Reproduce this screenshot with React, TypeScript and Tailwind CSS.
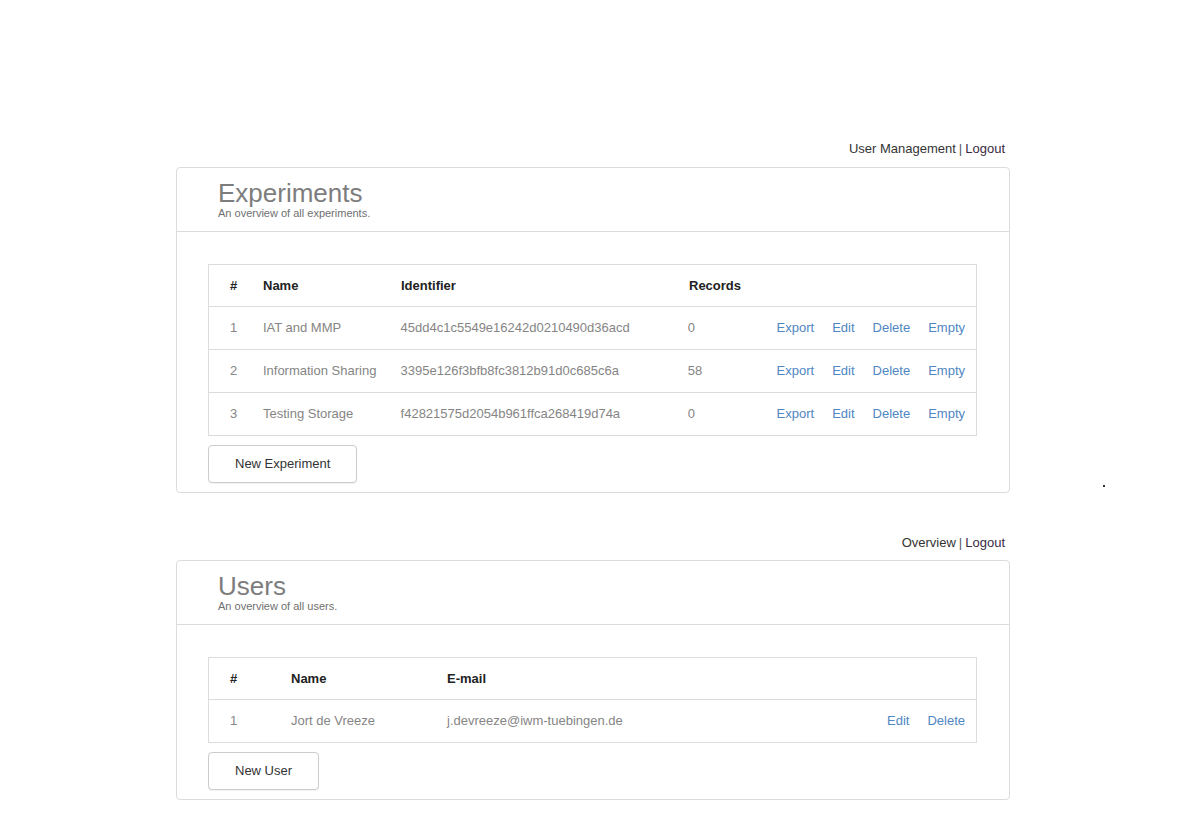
const EXPERIMENTS = [
  { id: 1, name: 'IAT and MMP', identifier: '45dd4c1c5549e16242d0210490d36acd', records: 0 },
  { id: 2, name: 'Information Sharing', identifier: '3395e126f3bfb8fc3812b91d0c685c6a', records: 58 },
  { id: 3, name: 'Testing Storage', identifier: 'f42821575d2054b961ffca268419d74a', records: 0 },
]

const USERS = [{ id: 1, name: 'Jort de Vreeze', email: 'j.devreeze@iwm-tuebingen.de' }]

function TopLinks({ first }: { first: string }) {
  return (
    <div className="flex justify-end pr-[5px] text-[13px] leading-[15px] text-[#333]">
      <a href="#">{first}</a>
      <span className="px-[3px] text-[#555]">|</span>
      <a href="#" className="text-[#3a2b45]">Logout</a>
    </div>
  )
}

function Panel({ title, subtitle, children }: { title: string; subtitle: string; children: React.ReactNode }) {
  return (
    <div className="w-[834px] rounded-[4px] border border-[#dcdcdc] bg-white">
      <div className="h-[64px] border-b border-[#dcdcdc] pl-[41px] pt-[12px]">
        <h1 className="text-[26px] leading-[26px] text-[#7d7d7d]">{title}</h1>
        <p className="mt-[1px] text-[11px] leading-[13px] text-[#6f6f6f]">{subtitle}</p>
      </div>
      <div className="pl-[31px] pr-[32px] pt-[32px] pb-[9px]">{children}</div>
    </div>
  )
}

function Actions({ items }: { items: string[] }) {
  return (
    <div className="flex flex-1 justify-end gap-[18px] pr-[11px] text-[#4f86c3]">
      {items.map((label) => (
        <a key={label} href="#">{label}</a>
      ))}
    </div>
  )
}

function Button({ label }: { label: string }) {
  return (
    <button className="mt-[9px] h-[38px] rounded-[4px] border border-[#cccccc] bg-white px-[26px] text-[13px] text-[#333] shadow-[0_1px_1px_rgba(0,0,0,0.06)]">
      {label}
    </button>
  )
}

export default function App() {
  return (
    <div className="relative min-h-[826px] bg-white font-['Liberation_Sans',Arial,sans-serif] text-[13px]">
      <div className="ml-[176px] w-[834px] pt-[141px]">
        <TopLinks first="User Management" />
        <div className="mt-[11px]">
          <Panel title="Experiments" subtitle="An overview of all experiments.">
            <div className="border border-[#dcdcdc]">
              <div className="flex h-[41px] items-center font-bold text-[#222]">
                <div className="w-[54px] pl-[21px]">#</div>
                <div className="w-[138px]">Name</div>
                <div className="w-[288px]">Identifier</div>
                <div className="w-[89px]">Records</div>
              </div>
              {EXPERIMENTS.map((e) => (
                <div key={e.id} className="flex h-[43px] items-center border-t border-[#dcdcdc] text-[#858585]">
                  <div className="w-[54px] pl-[21px]">{e.id}</div>
                  <div className="w-[138px]">{e.name}</div>
                  <div className="w-[288px]">{e.identifier}</div>
                  <div className="w-[89px]">{e.records}</div>
                  <Actions items={['Export', 'Edit', 'Delete', 'Empty']} />
                </div>
              ))}
            </div>
            <Button label="New Experiment" />
          </Panel>
        </div>

        <div className="mt-[42px]">
          <TopLinks first="Overview" />
        </div>
        <div className="mt-[10px]">
          <Panel title="Users" subtitle="An overview of all users.">
            <div className="border border-[#dcdcdc]">
              <div className="flex h-[41px] items-center font-bold text-[#222]">
                <div className="w-[82px] pl-[21px]">#</div>
                <div className="w-[156px]">Name</div>
                <div className="w-[300px]">E-mail</div>
              </div>
              {USERS.map((u) => (
                <div key={u.id} className="flex h-[43px] items-center border-t border-[#dcdcdc] text-[#858585]">
                  <div className="w-[82px] pl-[21px]">{u.id}</div>
                  <div className="w-[156px]">{u.name}</div>
                  <div className="w-[300px]">{u.email}</div>
                  <Actions items={['Edit', 'Delete']} />
                </div>
              ))}
            </div>
            <Button label="New User" />
          </Panel>
        </div>
      </div>

      {/* stray dot on the right */}
      <div className="absolute left-[1103px] top-[485px] h-[2px] w-[2px] bg-[#333]" />
    </div>
  )
}
